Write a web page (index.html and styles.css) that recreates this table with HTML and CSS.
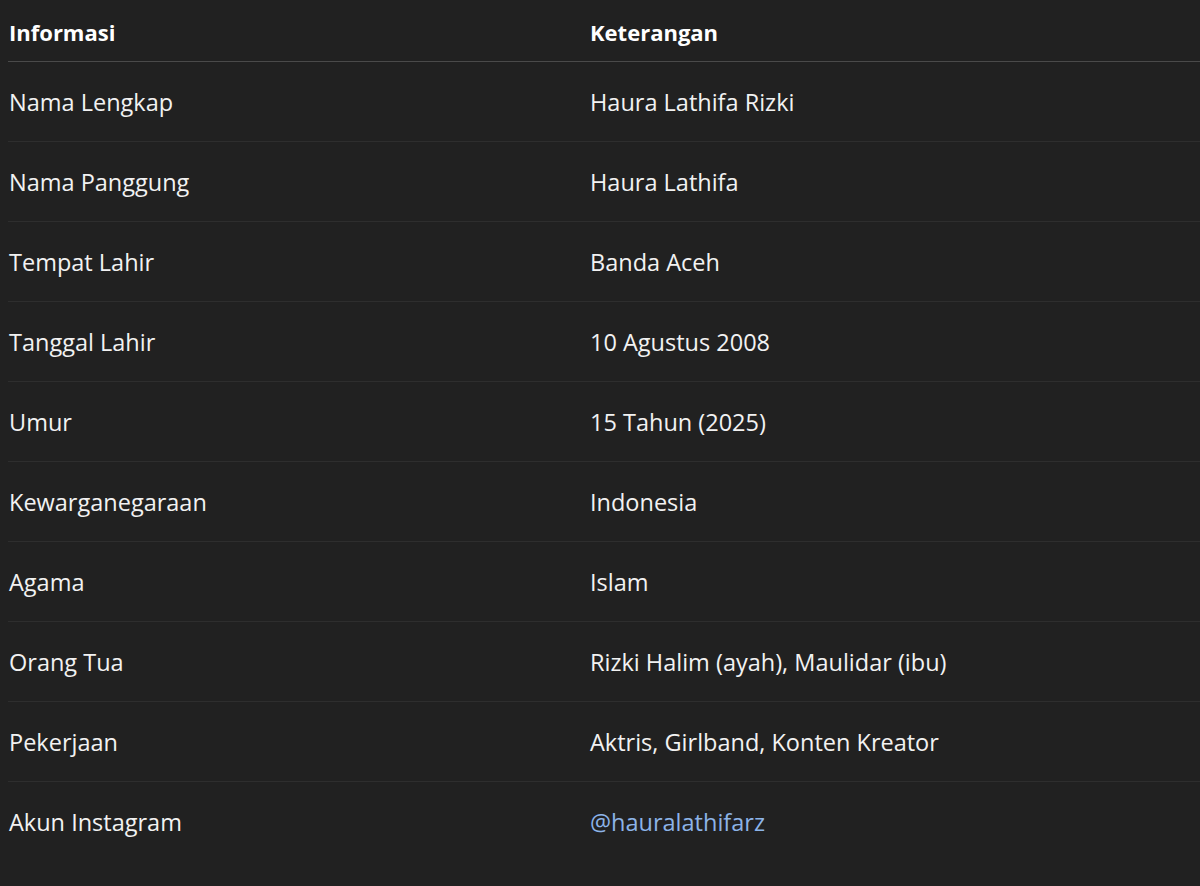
FILE: index.html
```html
<!DOCTYPE html>
<html lang="id">
<head>
<meta charset="utf-8">
<title>Profil Haura Lathifa</title>
<link rel="stylesheet" href="styles.css">
</head>
<body>
<table class="info">
  <thead>
    <tr><th class="c1">Informasi</th><th class="c2">Keterangan</th></tr>
  </thead>
  <tbody>
    <tr><td>Nama Lengkap</td><td>Haura Lathifa Rizki</td></tr>
    <tr><td>Nama Panggung</td><td>Haura Lathifa</td></tr>
    <tr><td>Tempat Lahir</td><td>Banda Aceh</td></tr>
    <tr><td>Tanggal Lahir</td><td>10 Agustus 2008</td></tr>
    <tr><td>Umur</td><td>15 Tahun (2025)</td></tr>
    <tr><td>Kewarganegaraan</td><td>Indonesia</td></tr>
    <tr><td>Agama</td><td>Islam</td></tr>
    <tr><td>Orang Tua</td><td>Rizki Halim (ayah), Maulidar (ibu)</td></tr>
    <tr><td>Pekerjaan</td><td>Aktris, Girlband, Konten Kreator</td></tr>
    <tr><td>Akun Instagram</td><td><a class="link" href="#">@hauralathifarz</a></td></tr>
  </tbody>
</table>
</body>
</html>
```
FILE: styles.css
```css
html, body {
  margin: 0;
  background: #212121;
}
body {
  padding-left: 8px;
  font-family: "Open Sans", "Noto Sans", sans-serif;
  color: #f2f2f2;
}
.info {
  border-collapse: collapse;
  width: 1192px;
  table-layout: fixed;
}
.info th, .info td {
  text-align: left;
  padding: 0 0 0 1px;
  vertical-align: middle;
}
.info th {
  height: 59px;
  padding-top: 2px;
  font-size: 22px;
  font-weight: 700;
  color: #ffffff;
  border-bottom: 1px solid #4a4a4a;
}
.info .c1 { width: 580px; }
.info td {
  height: 79px;
  font-size: 23.5px;
  border-bottom: 1px solid #2e2e2e;
}
.info tbody tr:last-child td {
  border-bottom: none;
}
.link {
  color: #8db4e8;
  text-decoration: none;
}
```
